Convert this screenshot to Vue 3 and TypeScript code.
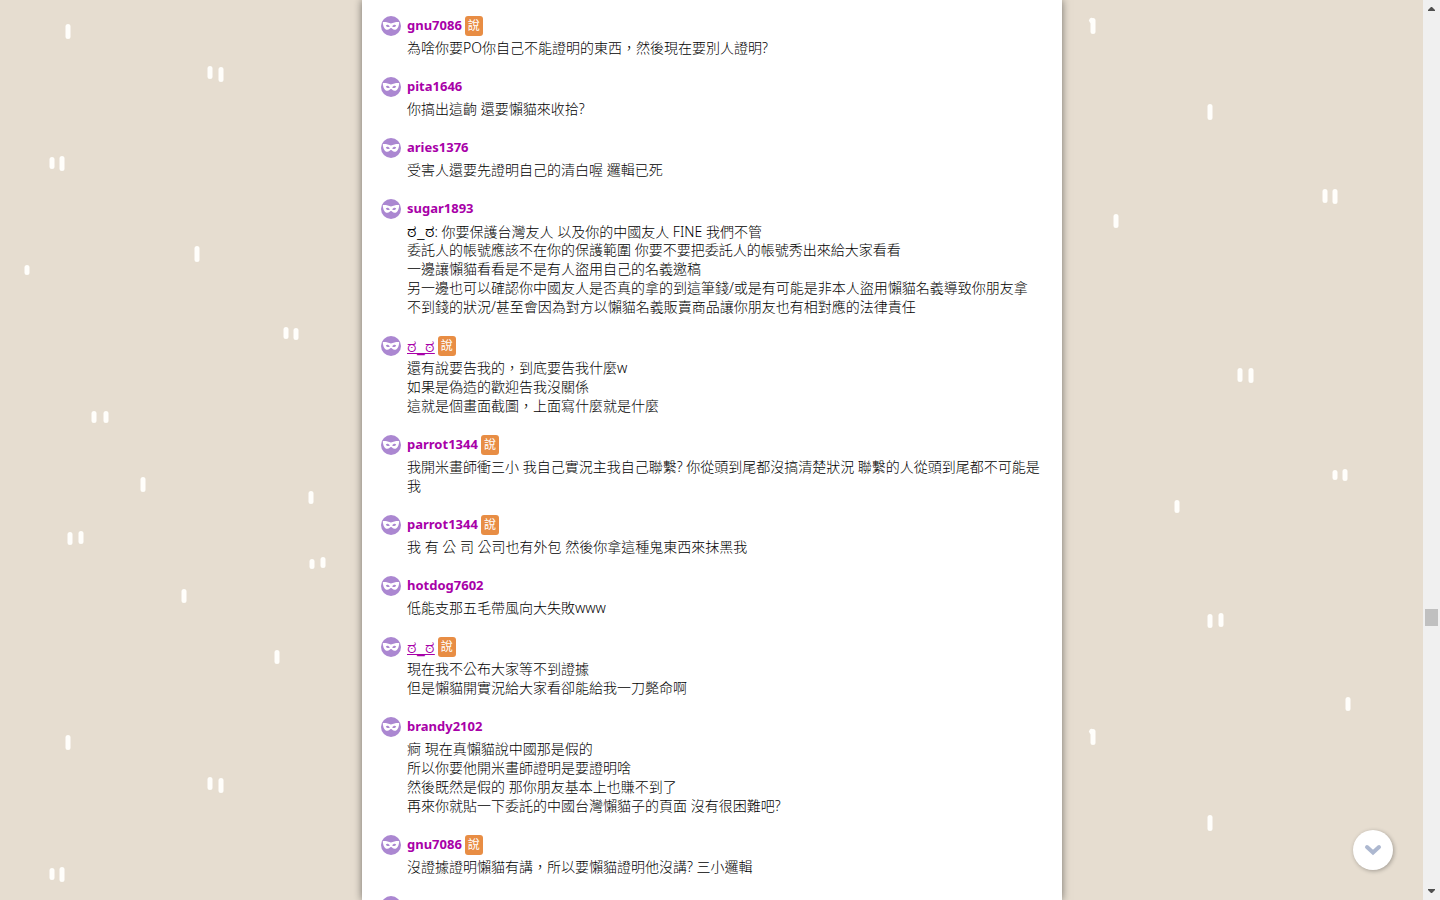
<script setup lang="ts">
interface Comment {
  name: string
  linked?: boolean
  badge?: boolean
  lines: string[]
}

const face = 'ಠ_ಠ'

const comments: Comment[] = [
  { name: 'gnu7086', badge: true, lines: ['為啥你要PO你自己不能證明的東西，然後現在要別人證明?'] },
  { name: 'pita1646', lines: ['你搞出這齣 還要懶貓來收拾?'] },
  { name: 'aries1376', lines: ['受害人還要先證明自己的清白喔 邏輯已死'] },
  {
    name: 'sugar1893',
    lines: [
      'ಠ_ಠ: 你要保護台灣友人 以及你的中國友人 FINE 我們不管',
      '委託人的帳號應該不在你的保護範圍 你要不要把委託人的帳號秀出來給大家看看',
      '一邊讓懶貓看看是不是有人盜用自己的名義邀稿',
      '另一邊也可以確認你中國友人是否真的拿的到這筆錢/或是有可能是非本人盜用懶貓名義導致你朋友拿',
      '不到錢的狀況/甚至會因為對方以懶貓名義販賣商品讓你朋友也有相對應的法律責任',
    ],
  },
  {
    name: face,
    linked: true,
    badge: true,
    lines: ['還有說要告我的，到底要告我什麼w', '如果是偽造的歡迎告我沒關係', '這就是個畫面截圖，上面寫什麼就是什麼'],
  },
  {
    name: 'parrot1344',
    badge: true,
    lines: ['我開米畫師衝三小 我自己實況主我自己聯繫? 你從頭到尾都沒搞清楚狀況 聯繫的人從頭到尾都不可能是', '我'],
  },
  { name: 'parrot1344', badge: true, lines: ['我 有 公 司 公司也有外包 然後你拿這種鬼東西來抹黑我'] },
  { name: 'hotdog7602', lines: ['低能支那五毛帶風向大失敗www'] },
  { name: face, linked: true, badge: true, lines: ['現在我不公布大家等不到證據', '但是懶貓開實況給大家看卻能給我一刀斃命啊'] },
  {
    name: 'brandy2102',
    lines: [
      '痾 現在真懶貓說中國那是假的',
      '所以你要他開米畫師證明是要證明啥',
      '然後既然是假的 那你朋友基本上也賺不到了',
      '再來你就貼一下委託的中國台灣懶貓子的頁面 沒有很困難吧?',
    ],
  },
  { name: 'gnu7086', badge: true, lines: ['沒證據證明懶貓有講，所以要懶貓證明他沒講? 三小邏輯'] },
  { name: '', lines: [] },
]

interface Run {
  text: string
  isFace: boolean
}

// The emoticon is set larger than the text round it
function runs(line: string): Run[] {
  return line
    .split(/(ಠ_ಠ)/)
    .filter((t) => t !== '')
    .map((t) => ({ text: t, isFace: t === face }))
}

// Short strokes of the wallpaper: centre x, top, bottom
const strokes: [number, number, number][] = [
  [68, 24, 39], [210, 66, 79], [221, 67, 82], [52, 157, 169], [62, 156, 171],
  [197, 246, 262], [27, 265, 275], [286, 327, 339], [296, 328, 340], [94, 411, 423],
  [106, 411, 423], [143, 477, 492], [311, 491, 504], [70, 532, 545], [81, 531, 544],
  [312, 559, 569], [323, 557, 568], [184, 589, 603], [277, 650, 664],
  [1093, 18, 34], [1210, 104, 120], [1325, 189, 203], [1335, 189, 204], [1116, 214, 228],
  [1240, 368, 382], [1251, 368, 383], [1335, 470, 480], [1345, 469, 481], [1177, 500, 513],
  [1210, 614, 628], [1221, 613, 627], [1348, 697, 711],
]
</script>

<template>
  <div class="page" lang="zh-Hant">
    <main class="stage">
      <svg class="wallpaper" aria-hidden="true">
        <defs>
          <pattern id="strokes" width="1440" height="711" patternUnits="userSpaceOnUse">
            <g stroke="#fffefb" stroke-width="5" stroke-linecap="round">
              <line v-for="(s, i) in strokes" :key="i" :x1="s[0]" :x2="s[0]" :y1="s[1] + 2.5" :y2="s[2] - 2.5" />
              <line x1="1091.500" x2="1092" y1="20.500" y2="21" />
            </g>
          </pattern>
        </defs>
        <rect width="100%" height="100%" fill="url(#strokes)" />
      </svg>

      <section class="panel">
        <article v-for="(c, i) in comments" :key="i" class="comment">
          <svg class="avatar" viewBox="0 0 20 20" aria-hidden="true">
            <circle cx="10" cy="10" r="10" fill="#ab87d1" />
            <path
              fill="#fff"
              fill-rule="evenodd"
              d="M1.800 6C4.500 5.800 7.500 6.200 10 7.600C12.500 6.200 15.500 5.800 18.200 6C18 10.500 16.500 13.800 13.600 13.800C11.800 13.800 11.200 12 10 12C8.800 12 8.200 13.800 6.400 13.800C3.500 13.800 2 10.500 1.800 6ZM4.800 9.400C5.800 11.300 7.600 11.600 8.800 10.400C7.800 8.600 6 8.200 4.800 9.400ZM15.200 9.400C14 8.200 12.200 8.600 11.200 10.400C12.400 11.600 14.200 11.300 15.200 9.400Z"
            />
          </svg>
          <div class="body">
            <header class="head">
              <a v-if="c.linked" class="name linked" href="#">{{ c.name }}</a>
              <span v-else class="name">{{ c.name }}</span>
              <span v-if="c.badge" class="badge">說</span>
            </header>
            <p class="text">
              <span v-for="(line, j) in c.lines" :key="j" class="line"
                ><span v-for="(r, k) in runs(line)" :key="k" :class="{ face: r.isFace }">{{ r.text }}</span></span
              >
            </p>
          </div>
        </article>
      </section>

      <button class="down" type="button" aria-label="往下">
        <svg width="18" height="12" viewBox="0 0 18 12" aria-hidden="true">
          <path d="M3 3L9 8.500L15 3" fill="none" stroke="#adb8d0" stroke-width="4" stroke-linecap="round" />
        </svg>
      </button>
    </main>

    <div class="scrollbar" aria-hidden="true">
      <svg width="7" height="4" viewBox="0 0 7 4"><path d="M0 4V3L3 0H4L7 3V4Z" fill="#505050" /></svg>
      <div class="track">
        <div class="before"></div>
        <div class="thumb"></div>
        <div class="after"></div>
      </div>
      <svg width="7" height="4" viewBox="0 0 7 4"><path d="M0 0V1L3 4H4L7 1V0Z" fill="#505050" /></svg>
    </div>
  </div>
</template>

<style>
body {
  margin: 0;
  overflow: hidden;
}
</style>

<style scoped>
.page {
  display: flex;
  height: 100vh;
  overflow: hidden;
  background: #e6ddd0;
  font-family: 'Noto Sans', 'Noto Sans CJK TC', sans-serif;
  font-size: 14px;
  color: #000;
}

.stage {
  position: relative;
  flex: 1;
  min-width: 0;
  display: flex;
  justify-content: center;
  padding-left: 1px;
}

.wallpaper {
  position: absolute;
  inset: 0;
  width: 100%;
  height: 100%;
}

.panel {
  position: relative;
  box-sizing: border-box;
  width: 100%;
  max-width: 700px;
  padding: 16px 19px 0;
  background: #fff;
  box-shadow: 0 0 8px rgba(0, 0, 0, 0.5);
  display: flex;
  flex-direction: column;
  gap: 20px;
}

.comment {
  display: flex;
  gap: 6px;
  flex-shrink: 0;
}

.avatar {
  width: 20px;
  height: 20px;
  flex-shrink: 0;
}

.body {
  flex: 1;
  min-width: 0;
}

.head {
  display: flex;
  align-items: flex-start;
  gap: 3px;
  height: 20px;
}

.name {
  font-size: 13px;
  line-height: 18px;
  font-weight: 700;
  color: #a800a8;
}

.linked {
  font-size: 18px;
  font-weight: 500;
  text-decoration: underline;
  text-decoration-thickness: 1px;
}

.badge {
  width: 18px;
  height: 20px;
  border-radius: 3px;
  background: #e88d44;
  color: #fff;
  font-size: 12px;
  line-height: 20px;
  text-align: center;
}

.text {
  margin: 2px 0 0;
  font-weight: 300;
  line-height: 19px;
}

.line {
  display: block;
  height: 19px;
  white-space: nowrap;
}

.face {
  font-size: 18px;
  line-height: 1;
}

.down {
  position: absolute;
  right: 30px;
  bottom: 30px;
  width: 40px;
  height: 40px;
  padding: 0;
  border: 0;
  border-radius: 50%;
  background: #fff;
  box-shadow: 1px 1px 4px rgba(0, 0, 0, 0.3);
  display: flex;
  align-items: center;
  justify-content: center;
}

.scrollbar {
  box-sizing: border-box;
  width: 17px;
  padding: 7px 0;
  background: #f0f0f0;
  display: flex;
  flex-direction: column;
  align-items: center;
}

.track {
  flex: 1;
  width: 13px;
  display: flex;
  flex-direction: column;
}

.before {
  flex: 598;
}

.thumb {
  height: 17px;
  background: #c0c0c0;
}

.after {
  flex: 263;
}
</style>
